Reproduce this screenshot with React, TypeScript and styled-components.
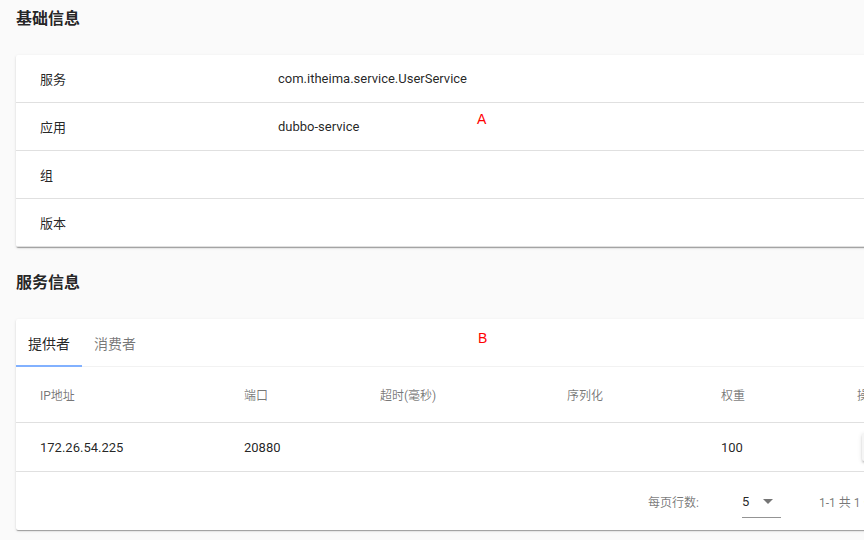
import React from 'react';
import styled, { createGlobalStyle } from 'styled-components';

const GlobalStyle = createGlobalStyle`
  html, body {
    margin: 0;
    padding: 0;
    background: #fafafa;
    overflow: hidden;
  }
  body {
    font-family: Roboto, "Noto Sans CJK SC", sans-serif;
    color: rgba(0, 0, 0, 0.87);
  }
`;

const Page = styled.div`
  width: 1100px;
  padding: 0 16px;
  height: 540px;
`;

const SectionTitle = styled.h3<{ $first?: boolean }>`
  margin: 0;
  padding: ${p => (p.$first ? '10px' : '27px')} 0 27px;
  font-size: 16px;
  line-height: 18px;
  font-weight: 700;
  color: rgba(0, 0, 0, 0.87);
`;

const Card = styled.div`
  position: relative;
  background: #fff;
  border-radius: 2px;
  box-shadow: 0 2px 1px -1px rgba(0, 0, 0, 0.2), 0 1px 1px 0 rgba(0, 0, 0, 0.14),
    0 1px 3px 0 rgba(0, 0, 0, 0.12);
`;

const InfoRow = styled.div`
  display: grid;
  grid-template-columns: 238px 1fr;
  align-items: center;
  height: 48px;
  padding-left: 24px;
  font-size: 13px;
  border-bottom: 1px solid #e0e0e0;
  box-sizing: border-box;
  &:last-child {
    border-bottom: none;
  }
`;

const Note = styled.span<{ $left: number; $top: number }>`
  position: absolute;
  left: ${p => p.$left}px;
  top: ${p => p.$top}px;
  font-family: "Liberation Sans", sans-serif;
  font-size: 14px;
  line-height: 14px;
  color: #ff0000;
`;

const Tabs = styled.div`
  display: flex;
  height: 48px;
  border-bottom: 1px solid #f2f2f2;
  box-sizing: border-box;
`;

const Tab = styled.div<{ $active?: boolean }>`
  position: relative;
  display: flex;
  align-items: center;
  padding: 0 12px;
  font-size: 14px;
  color: ${p => (p.$active ? 'rgba(0,0,0,0.87)' : 'rgba(0,0,0,0.54)')};
  &::after {
    content: '';
    display: ${p => (p.$active ? 'block' : 'none')};
    position: absolute;
    left: 0;
    right: 0;
    bottom: -1px;
    height: 2px;
    background: #82b1ff;
  }
`;

const cols = '204px 136px 187px 154px 136px 1fr';

const HeadRow = styled.div`
  display: grid;
  grid-template-columns: ${cols};
  align-items: center;
  height: 56px;
  border-bottom: 1px solid rgba(0, 0, 0, 0.12);
  box-sizing: border-box;
  font-size: 12px;
  font-weight: 400;
  color: rgba(0, 0, 0, 0.54);
`;

const DataRow = styled.div`
  display: grid;
  grid-template-columns: ${cols};
  align-items: center;
  height: 49px;
  border-bottom: 1px solid rgba(0, 0, 0, 0.12);
  box-sizing: border-box;
  font-size: 13px;
`;

const Cell = styled.div`
  display: flex;
  align-items: center;
  padding-left: 24px;
  white-space: nowrap;
`;

const ActionButton = styled.button`
  margin-left: 5px;
  width: 64px;
  height: 28px;
  border: none;
  border-radius: 2px;
  background: #f5f5f5;
  box-shadow: 0 3px 1px -2px rgba(0, 0, 0, 0.2), 0 2px 2px 0 rgba(0, 0, 0, 0.14),
    0 1px 5px 0 rgba(0, 0, 0, 0.12);
`;

const Footer = styled.div`
  display: flex;
  align-items: center;
  height: 58px;
  padding-left: 632px;
  font-size: 12px;
  color: rgba(0, 0, 0, 0.54);
  white-space: nowrap;
`;

const Select = styled.div`
  display: flex;
  align-items: center;
  width: 39px;
  height: 30px;
  margin-left: 43px;
  margin-top: 4px;
  border-bottom: 1px solid rgba(0, 0, 0, 0.42);
  box-sizing: border-box;
  font-size: 13px;
  color: rgba(0, 0, 0, 0.87);
  padding-bottom: 2px;
  svg {
    margin-left: 14px;
  }
`;

const PageInfo = styled.span`
  margin-left: 38px;
`;

const headers = ['IP地址', '端口', '超时(毫秒)', '序列化', '权重', '操作'];

export default function App() {
  return (
    <Page>
      <GlobalStyle />
      <SectionTitle $first>基础信息</SectionTitle>
      <Card>
        <InfoRow><span>服务</span><span>com.itheima.service.UserService</span></InfoRow>
        <InfoRow><span>应用</span><span>dubbo-service</span></InfoRow>
        <InfoRow><span>组</span><span /></InfoRow>
        <InfoRow><span>版本</span><span /></InfoRow>
        <Note $left={461} $top={57}>A</Note>
      </Card>

      <SectionTitle>服务信息</SectionTitle>
      <Card>
        <Tabs>
          <Tab $active>提供者</Tab>
          <Tab>消费者</Tab>
        </Tabs>
        <Note $left={462} $top={12}>B</Note>
        <HeadRow>
          {headers.map(h => <Cell key={h}>{h}</Cell>)}
        </HeadRow>
        <DataRow>
          <Cell>172.26.54.225</Cell>
          <Cell>20880</Cell>
          <Cell />
          <Cell />
          <Cell>100</Cell>
          <Cell><ActionButton /></Cell>
        </DataRow>
        <Footer>
          <span>每页行数:</span>
          <Select>
            <span>5</span>
            <svg width="10" height="5" viewBox="0 0 10 5">
              <path d="M0 0 L5 5 L10 0 Z" fill="rgba(0,0,0,0.54)" />
            </svg>
          </Select>
          <PageInfo>1-1 共 1 条</PageInfo>
        </Footer>
      </Card>
    </Page>
  );
}
